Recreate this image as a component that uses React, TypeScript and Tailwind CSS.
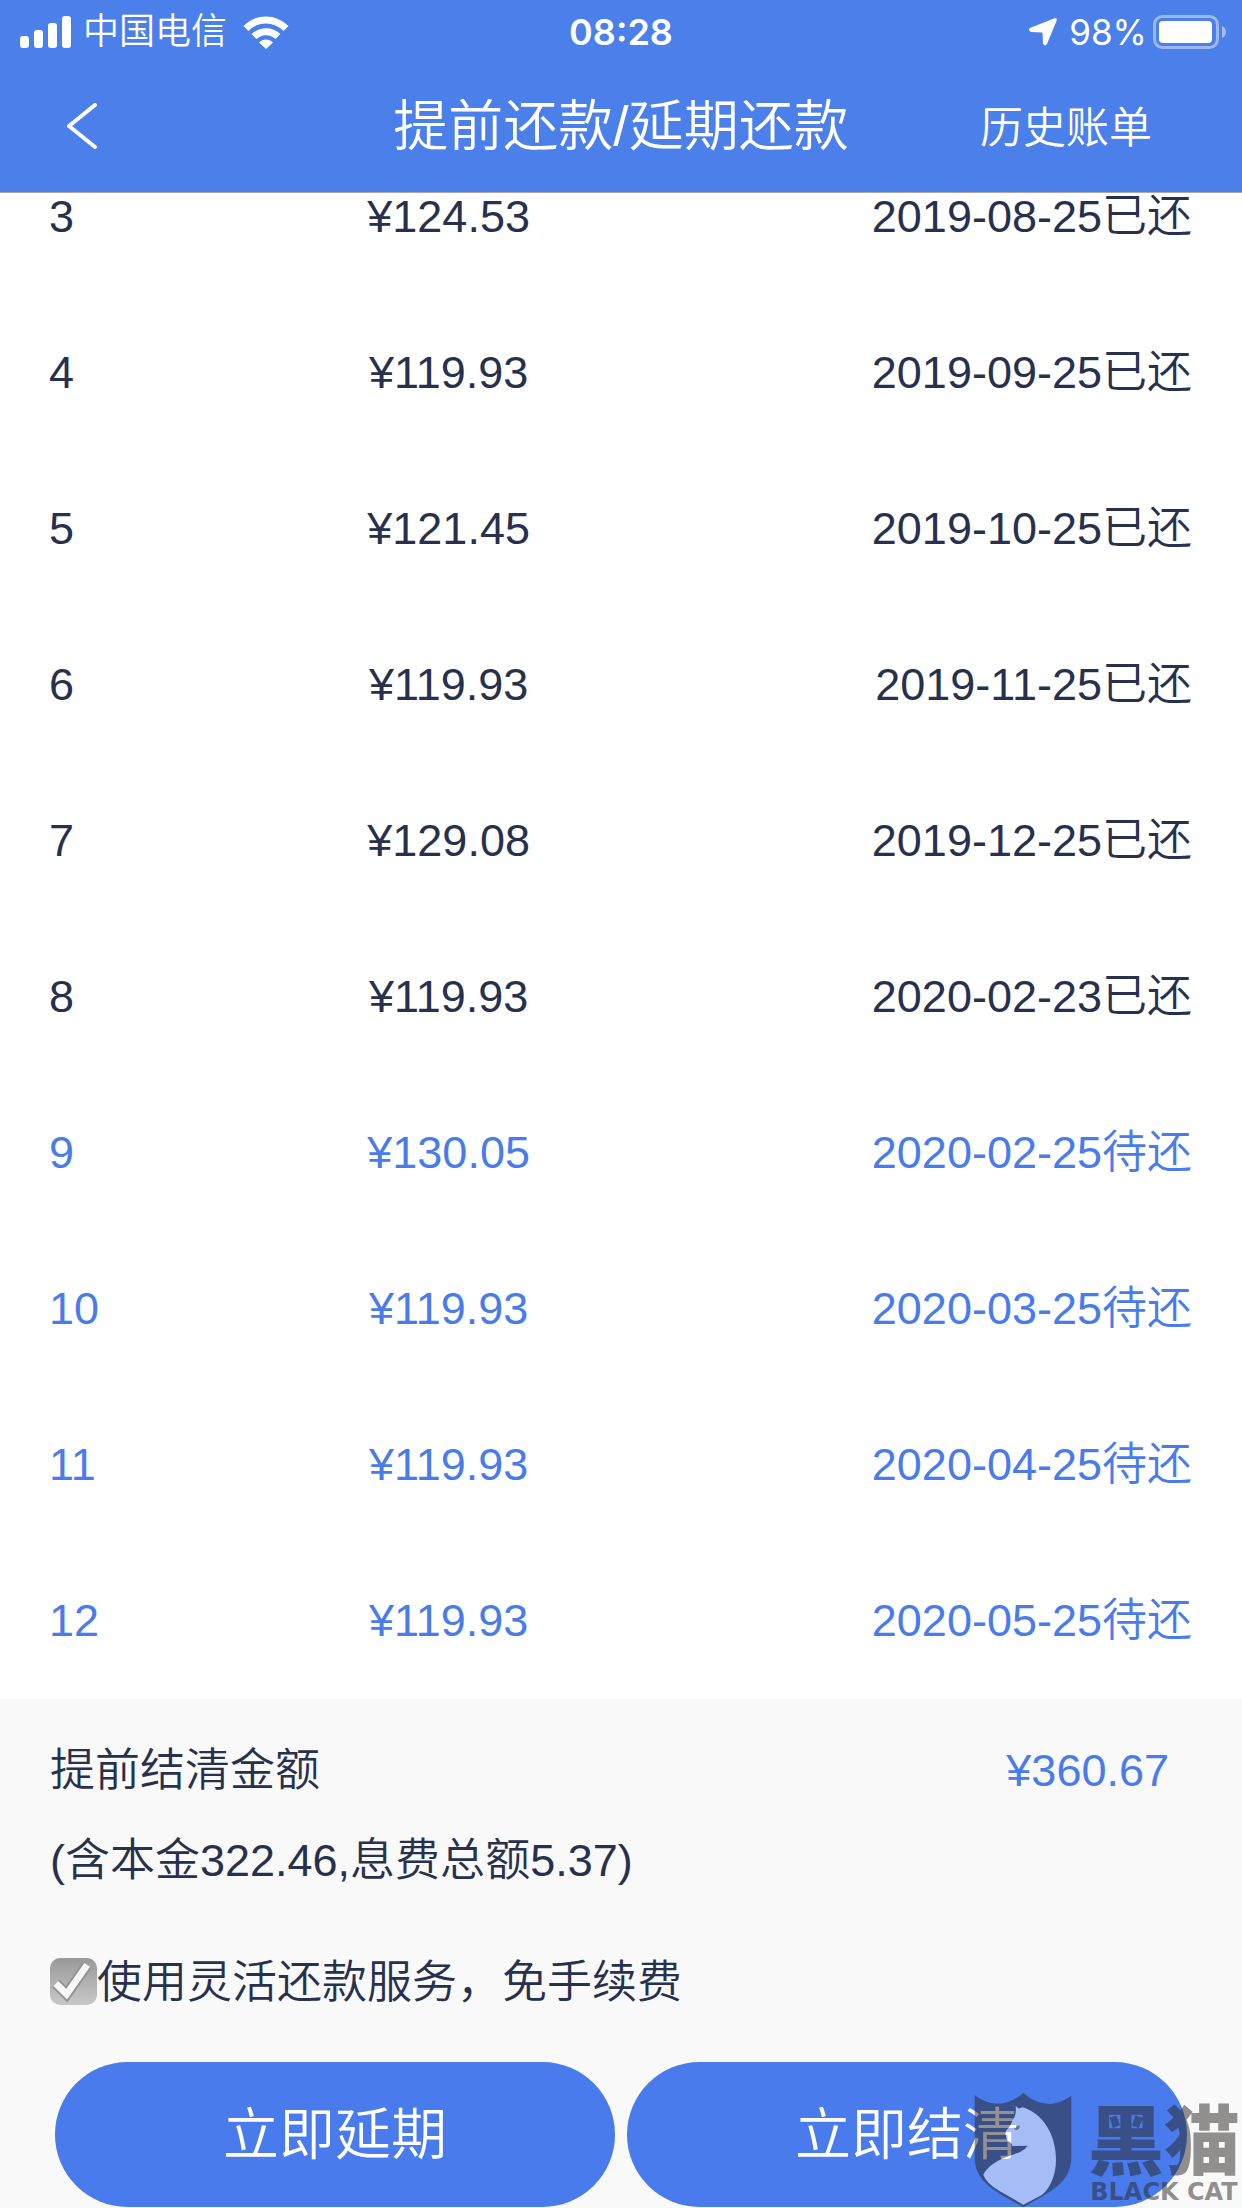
import React from "react";

type Bill = { no: number; amount: string; date: string; paid: boolean };

const bills: Bill[] = [
  { no: 3, amount: "124.53", date: "2019-08-25", paid: true },
  { no: 4, amount: "119.93", date: "2019-09-25", paid: true },
  { no: 5, amount: "121.45", date: "2019-10-25", paid: true },
  { no: 6, amount: "119.93", date: "2019-11-25", paid: true },
  { no: 7, amount: "129.08", date: "2019-12-25", paid: true },
  { no: 8, amount: "119.93", date: "2020-02-23", paid: true },
  { no: 9, amount: "130.05", date: "2020-02-25", paid: false },
  { no: 10, amount: "119.93", date: "2020-03-25", paid: false },
  { no: 11, amount: "119.93", date: "2020-04-25", paid: false },
  { no: 12, amount: "119.93", date: "2020-05-25", paid: false },
];

function StatusBar() {
  return (
    <div className="grid h-16 grid-cols-3 items-center px-4">
      <div className="flex items-center pl-1">
        <svg width="51" height="32" viewBox="0 0 51 32" fill="#fff" aria-hidden="true">
          <rect x="0" y="20" width="9" height="12" rx="3" />
          <rect x="14" y="14" width="9" height="18" rx="3" />
          <rect x="28" y="7" width="9" height="25" rx="3" />
          <rect x="42" y="0" width="9" height="32" rx="3" />
        </svg>
        <span className="ml-3 text-[36px] leading-[60px]">中国电信</span>
        <svg className="ml-4" width="46" height="33" viewBox="0 0 46 33" aria-hidden="true">
          <g fill="none" stroke="#fff" strokeWidth="7">
            <path d="M3 12.500C14.500 1 31.500 1 43 12.500" />
            <path d="M11 20.500C18 14 28 14 35 20.500" />
          </g>
          <path d="M16 26.500C20 22.500 26 22.500 30 26.500L23 33Z" fill="#fff" />
        </svg>
      </div>
      <span className="text-center font-[Inter] text-[36px] leading-[60px] font-semibold">08:28</span>
      <div className="flex items-center justify-end">
        <svg width="28" height="28" viewBox="0 0 28 28" fill="#fff" aria-hidden="true">
          <path d="M25.500.300Q28.500-.500 27.700 2.500L18 26Q16 29 14 25.500L13.500 14.500L2 14Q-1.500 12 1 10Z" />
        </svg>
        <span className="ml-3 font-[Inter] text-[35px] leading-[60px] font-normal">98%</span>
        <svg className="ml-1.5" width="73" height="34" viewBox="0 0 73 34" aria-hidden="true">
          <rect x="1.500" y="1.500" width="63" height="31" rx="8" fill="none" stroke="#fff" strokeOpacity=".45" strokeWidth="3" />
          <rect x="6" y="6" width="53" height="22" rx="4" fill="#fff" />
          <path d="M69 11Q73 13 73 17T69 23Z" fill="#fff" fillOpacity=".5" />
        </svg>
      </div>
    </div>
  );
}

function NavBar() {
  return (
    <nav className="grid h-32 grid-cols-[1fr_auto_1fr] items-center px-[66px] pb-1">
      <button type="button" aria-label="返回" className="justify-self-start">
        <svg width="32" height="46" viewBox="0 0 32 46" fill="none" stroke="#fff" strokeWidth="4" strokeLinecap="round" strokeLinejoin="round">
          <path d="M29 2L3 23L29 44" />
        </svg>
      </button>
      <h1 className="text-[55px] leading-[80px] font-[350]">提前还款/延期还款</h1>
      <a href="#history" className="justify-self-end pt-1 pr-6 text-[43px] leading-[64px]">历史账单</a>
    </nav>
  );
}

function BillTable() {
  return (
    <table className="w-full shrink-0 table-fixed">
      <colgroup>
        <col className="w-[22%]" />
        <col className="w-[28%]" />
        <col />
      </colgroup>
      <tbody>
        {bills.map((b) => (
          <tr key={b.no} className={b.paid ? "h-[156px] text-[#27314d]" : "h-[156px] text-[#497bec]"}>
            <td className="p-0 pl-[49px]">{b.no}</td>
            <td className="p-0 pl-[3px] text-center">¥{b.amount}</td>
            <td className="p-0 pr-[50px] text-right">
              {b.date}
              {b.paid ? "已还" : "待还"}
            </td>
          </tr>
        ))}
      </tbody>
    </table>
  );
}

function Watermark() {
  return (
    <div className="pointer-events-none absolute right-0 bottom-0 flex items-end text-[#2a2424]/50">
      <svg width="98" height="116" viewBox="98 96 294 348" aria-hidden="true">
        <path
          fillRule="evenodd"
          d="M100 106Q175 160 246 99Q317 160 390 107V290C390 370 325 395 246 442C167 395 100 370 100 290ZM223 138L233 146L243 142C305 160 344 225 344 300C344 350 322 390 300 406L246 434L176 394Q135 370 126 344C150 300 205 290 238 275Q252 268 259 257L213 258Q212 247 200 243Q190 230 194 212Q210 197 215 178Q226 165 223 138Z"
          fill="currentColor"
        />
        <path
          d="M223 138L233 146L243 142C305 160 344 225 344 300C344 350 322 390 300 406L246 434L176 394Q135 370 126 344C150 300 205 290 238 275Q252 268 259 257L213 258Q212 247 200 243Q190 230 194 212Q210 197 215 178Q226 165 223 138Z"
          fill="#fff"
          fillOpacity=".5"
        />
        <path d="M217 200L222 206Q226 196 235 196Q236 208 226 210Q218 210 217 200Z" fill="currentColor" />
      </svg>
      <div className="ml-4 flex flex-col items-center gap-1.5 pr-0.5 pb-1">
        <span className="font-['Noto_Sans_CJK_SC',sans-serif] text-[76px] leading-[76px] font-black">黑猫</span>
        <span className="font-['DejaVu_Sans',sans-serif] text-[24px] leading-[24px] font-bold">BLACK CAT</span>
      </div>
    </div>
  );
}

export default function App() {
  return (
    <div className="relative flex h-screen flex-col overflow-hidden bg-white font-['Liberation_Sans','Noto_Sans_CJK_SC',sans-serif] text-[45px] leading-[64px] font-[350] text-[#27314d]">
      <header className="shrink-0 border-b border-[#a9a9b0] bg-[#4b7fea] text-white">
        <StatusBar />
        <NavBar />
      </header>
      <main className="flex min-h-0 flex-1 flex-col justify-end overflow-hidden">
        <BillTable />
      </main>
      <footer className="shrink-0 bg-[#f9f9f9] pt-10">
        <div className="flex items-center justify-between pr-[73px] pl-[50px]">
          <span>提前结清金额</span>
          <span className="text-[#497bec]">¥360.67</span>
        </div>
        <p className="mt-[26px] pl-[50px]">(含本金322.46,息费总额5.37)</p>
        <label className="mt-[58px] flex items-center pl-[50px]">
          <span className="relative mb-1 flex size-[47px]">
            <input
              type="checkbox"
              defaultChecked
              className="peer size-[47px] appearance-none rounded-[10px] bg-linear-to-b from-[#999] to-[#c8c8c8]"
            />
            <svg className="pointer-events-none absolute inset-0 hidden peer-checked:block" viewBox="0 0 48 48" fill="none" aria-hidden="true">
              <path d="M6 26L17 37L38 7" stroke="#939393" strokeWidth="11" />
              <path d="M6 26L17 37L38 7" stroke="#f7f7f7" strokeWidth="7" />
            </svg>
          </span>
          <span>使用灵活还款服务，免手续费</span>
        </label>
        <div className="mt-[47px] flex gap-3 px-[55px] pb-px text-[56px] leading-[81px] text-white">
          <button type="button" className="flex-1 rounded-full bg-[#497bec] py-8">立即延期</button>
          <button type="button" className="flex-1 rounded-full bg-[#497bec] py-8">立即结清</button>
        </div>
      </footer>
      <Watermark />
    </div>
  );
}
